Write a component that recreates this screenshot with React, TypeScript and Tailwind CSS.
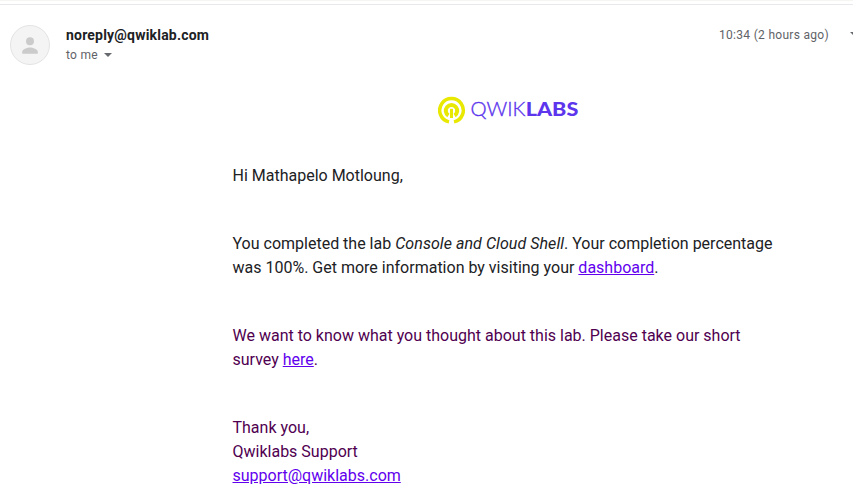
function Caret({ className = "" }: { className?: string }) {
  return (
    <svg viewBox="0 0 8 4" className={`h-1 w-2 shrink-0 ${className}`} aria-hidden="true">
      <path d="M0 0h8L4 4z" fill="#666a6f" />
    </svg>
  );
}

function Avatar() {
  return (
    <svg viewBox="0 0 40 40" className="size-10 shrink-0" aria-hidden="true">
      <circle cx="20" cy="20" r="19.5" fill="#f4f4f4" stroke="#e3e3e3" />
      <circle cx="20" cy="16.2" r="4" fill="#cbcbcb" />
      <path d="M12.2 28.8v-2c0-2.6 5.2-4.2 7.8-4.2s7.8 1.6 7.8 4.2v2z" fill="#cbcbcb" />
    </svg>
  );
}

function QwiklabsLogo() {
  return (
    <svg viewBox="0 0 142 28" className="h-7 w-[142px]" role="img" aria-label="Qwiklabs">
      <g fill="none" stroke="#e8e800">
        <path d="M11 25.9a11.8 11.8 0 1 1 5 0" strokeWidth="3.5" />
        <path d="M10.4 19.5a5.7 5.7 0 1 1 6.2 0" strokeWidth="4" />
        <path d="M13.5 12.8V22" strokeWidth="3" />
      </g>
      <text x="32.5" y="20" fontSize="19.2" fill="#5c35ed" stroke="#5c35ed" strokeWidth="0.35" fontWeight="300" textLength="55" lengthAdjust="spacingAndGlyphs" className="font-['Lato',sans-serif]">QWIK</text>
      <text x="87.7" y="20" fontSize="19.2" fill="#5c35ed" fontWeight="900" textLength="52.6" lengthAdjust="spacingAndGlyphs" className="font-['Lato',sans-serif]">LABS</text>
    </svg>
  );
}

function MailLink({ children }: { children: string }) {
  return <a href="#" className="text-[#6200ee] underline">{children}</a>;
}

export default function App() {
  return (
    <div className="h-[501px] w-[853px] overflow-hidden bg-white font-['Roboto',sans-serif] text-[#202124]">
      <div className="h-[5px] border-b border-[#e8e9ed]">
        <div className="h-px bg-[#f5f5f1]" />
      </div>
      <header className="flex h-[60px] items-start pt-5 pl-[10px]">
        <Avatar />
        <div className="ml-4 flex-1">
          <div className="text-sm leading-5 font-bold tracking-[0.2px]">noreply@qwiklab.com</div>
          <div className="flex items-center gap-1.5 text-xs leading-5 tracking-[0.3px] text-[#5f6368]">
            <span>to me</span>
            <Caret />
          </div>
        </div>
        <time className="text-xs leading-5 tracking-[0.3px] text-[#5f6368]">10:34 (2 hours ago)</time>
        <div className="mt-[7px] ml-[21px] w-[3px] overflow-hidden"><Caret /></div>
      </header>
      <main className="ml-[232.5px] w-[551px] text-base leading-6">
        <div className="flex h-[99px] justify-center pt-[31px] pl-px"><QwiklabsLogo /></div>
        <p>Hi Mathapelo Motloung,</p>
        <p className="mt-11">
          You completed the lab <em className="tracking-[0.06px]">Console and Cloud Shell</em>. Your completion percentage<br />
          was 100%. Get more information by visiting your <MailLink>dashboard</MailLink>.
        </p>
        <div className="text-[#500050]">
          <p className="mt-11">
            We want to know what you thought about this lab. Please take our short<br />
            survey <MailLink>here</MailLink>.
          </p>
          <p className="mt-11">
            Thank you,<br />
            Qwiklabs Support<br />
            <MailLink>support@qwiklabs.com</MailLink>
          </p>
        </div>
      </main>
    </div>
  );
}
